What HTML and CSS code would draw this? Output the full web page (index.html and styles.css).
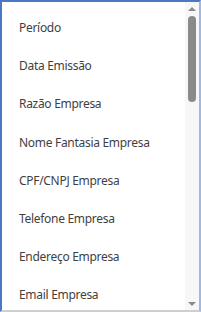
FILE: index.html
```html
<!DOCTYPE html>
<html>
<head>
<meta charset="utf-8">
<link rel="stylesheet" href="styles.css">
</head>
<body>
<div class="box">
  <ul class="list">
    <li>Período</li>
    <li>Data Emissão</li>
    <li>Razão Empresa</li>
    <li>Nome Fantasia Empresa</li>
    <li>CPF/CNPJ Empresa</li>
    <li>Telefone Empresa</li>
    <li>Endereço Empresa</li>
    <li>Email Empresa</li>
  </ul>
  <div class="scrollbar">
    <div class="arrow up"></div>
    <div class="track"><div class="thumb"></div></div>
    <div class="arrow down"></div>
  </div>
</div>
</body>
</html>
```
FILE: styles.css
```css
html, body {
  margin: 0;
  padding: 0;
  background: #fff;
}
.box {
  width: 201px;
  height: 312px;
  box-sizing: border-box;
  border-top: 2px solid #4a78c8;
  border-left: 2px solid #4a78c8;
  border-right: 2px solid #9fb8e6;
  border-bottom: 2px solid #cfcfcf;
  display: flex;
  overflow: hidden;
}
.list {
  list-style: none;
  margin: 0;
  padding: 7px 0 0 17px;
  flex: 1;
  font-family: "Noto Sans", sans-serif;
  font-size: 12px;
  letter-spacing: -0.3px;
  color: #3f3f3f;
}
.list li {
  height: 38.2px;
  line-height: 38px;
  white-space: nowrap;
}
.scrollbar {
  width: 14px;
  background: #f7f7f7;
  display: flex;
  flex-direction: column;
  align-items: center;
}
.arrow {
  width: 0;
  height: 0;
  border-left: 4px solid transparent;
  border-right: 4px solid transparent;
}
.arrow.up {
  margin-top: 5px;
  border-bottom: 4px solid #8a8a8a;
}
.arrow.down {
  margin-bottom: 4px;
  border-top: 4px solid #8a8a8a;
}
.track {
  flex: 1;
  width: 100%;
  display: flex;
  justify-content: center;
}
.thumb {
  margin-top: 5px;
  width: 8px;
  height: 86px;
  border-radius: 4px;
  background: #8a8a8a;
}
```
